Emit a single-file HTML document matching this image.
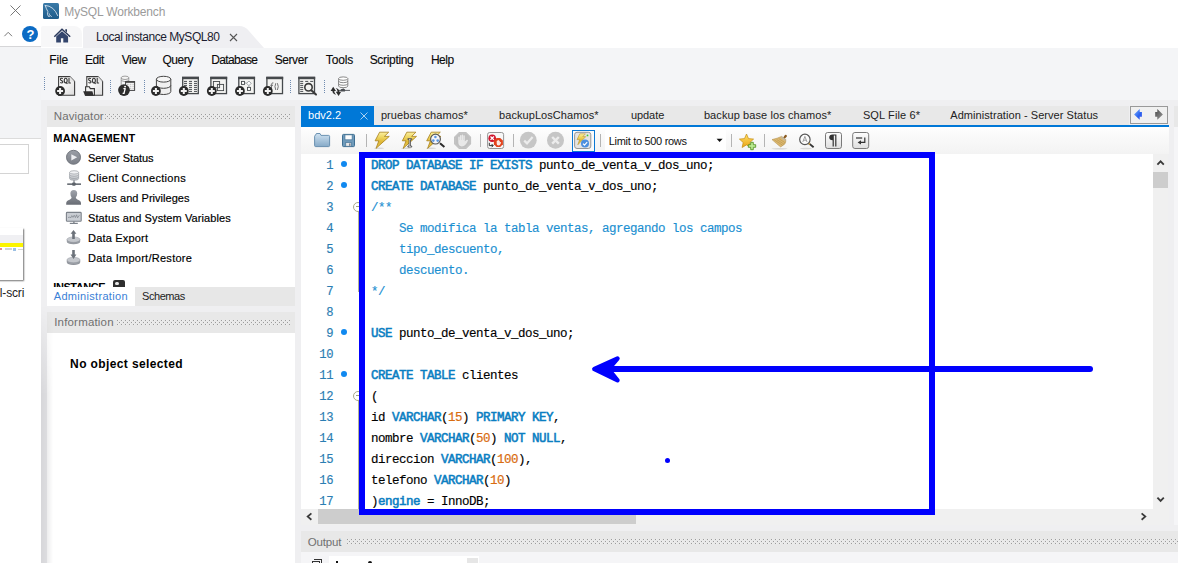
<!DOCTYPE html>
<html>
<head>
<meta charset="utf-8">
<style>
html,body{margin:0;padding:0;}
html{width:1178px;height:563px;overflow:hidden;}
body{width:1178px;height:563px;overflow:hidden;background:#fff;position:relative;font-family:"Liberation Sans",sans-serif;font-size:12px;color:#000;}
.a{position:absolute;}
.t{position:absolute;white-space:nowrap;line-height:14px;}
.dots{position:absolute;height:1px;background:repeating-linear-gradient(90deg,#9c9c9c 0 1px,rgba(255,255,255,0.35) 1px 2px,transparent 2px 4px);}
.dots::before,.dots::after{content:"";position:absolute;height:1px;right:0;}
.dots::before{left:2px;top:2px;background:repeating-linear-gradient(90deg,#9c9c9c 0 1px,rgba(255,255,255,0.35) 1px 2px,transparent 2px 4px);}
.dots::after{left:0;top:4px;background:repeating-linear-gradient(90deg,#9c9c9c 0 1px,rgba(255,255,255,0.35) 1px 2px,transparent 2px 4px);}
.code{position:absolute;left:371px;white-space:pre;font-family:"Liberation Mono",monospace;font-size:12.5px;letter-spacing:-0.5px;line-height:21px;height:21px;color:#000;-webkit-text-stroke:0.15px #000;}
.k{color:#0a7ec2;-webkit-text-stroke:0.55px #0a7ec2;}
.c{color:#1a8fd1;-webkit-text-stroke:0.15px #1a8fd1;}
.n{color:#d96c10;-webkit-text-stroke:0.2px #d96c10;}
.ln{position:absolute;left:300px;width:33.3px;text-align:right;font-family:"Liberation Mono",monospace;font-size:12.2px;letter-spacing:-0.32px;line-height:21px;height:21px;color:#2b7db3;-webkit-text-stroke:0.15px #2b7db3;}
.bp{position:absolute;left:341px;width:6px;height:6px;border-radius:3px;background:#1089f0;}
.sep{position:absolute;width:1px;background:#b8b8b8;}
.vsep{position:absolute;width:2px;background-image:linear-gradient(#6f8fc0 50%,transparent 50%);background-size:2px 2px;}
</style>
</head>
<body>
<!-- ===== left strip: other window ===== -->
<div class="a" style="left:0;top:47px;width:41px;height:91px;background:#f3f4f6;"></div>
<div class="a" style="left:0;top:46px;width:41px;height:1px;background:#d6d6d8;"></div>
<div class="a" style="left:0;top:138px;width:41px;height:1px;background:#dcdcdc;"></div>
<div class="a" style="left:-2px;top:144px;width:29px;height:28px;border:1px solid #d4d4d4;background:#fff;"></div>
<!-- thumbnail -->
<div class="a" style="left:-3px;top:228px;width:26px;height:52px;background:#fff;box-shadow:1px 1px 1.5px rgba(0,0,0,0.55);"></div>
<div class="a" style="left:0;top:235px;width:23px;height:8px;background:#f0f0f3;"></div>
<div class="a" style="left:0;top:243px;width:23px;height:3.5px;background:#fbf400;"></div>
<div class="a" style="left:0;top:248px;width:2px;height:2px;background:#e08a8a;"></div>
<div class="a" style="left:5px;top:248px;width:7px;height:2px;background:#cfd3da;"></div>
<div class="a" style="left:13px;top:247.5px;width:3px;height:3px;background:#9cc0e4;"></div>
<div class="a" style="left:18px;top:248.5px;width:5px;height:1.5px;background:#d4d4d4;"></div>
<!-- close X, caret, help -->
<svg class="a" style="left:9px;top:4px;" width="13" height="13" viewBox="0 0 13 13"><path d="M1.5 1.5 L11.5 11.5 M11.5 1.5 L1.5 11.5" stroke="#6a6a6a" stroke-width="0.9" fill="none"/></svg>
<svg class="a" style="left:3px;top:30px;" width="11" height="8" viewBox="0 0 11 8"><path d="M1.4 6.2 L5.2 2.3 L9 6.2" stroke="#7a7a7a" stroke-width="1" fill="none"/></svg>
<div class="a" style="left:22px;top:26px;width:16px;height:16px;border-radius:8px;background:#0b6bc4;"></div>

<!-- ===== workbench window ===== -->
<!-- title -->
<div class="a" style="left:43px;top:3px;width:16px;height:16px;border-radius:1.5px;background:linear-gradient(#3a7aa8,#1f5c8a);"></div>
<svg class="a" style="left:40px;top:0px;" width="24" height="24" viewBox="40 0 24 24"><path d="M45.2 5.4 Q49.4 5.6 52.8 8.4 Q56 11.2 57.7 15.6 M45.3 5.8 Q46.4 9 47.9 11.6 Q46.9 14.4 48.4 16.4 Q50.2 16.6 50.2 15.6 Q49.3 14.8 49.2 13.8 M50.7 15.9 L51.4 16.6" stroke="#dfe9f2" stroke-width="0.85" fill="none" stroke-linecap="round"/></svg>

<!-- top tab row -->
<div class="a" style="left:41px;top:26px;width:41px;height:21px;background:#f7f7f8;border-radius:2px 8px 0 0;"></div>
<svg class="a" style="left:83px;top:26px;" width="185" height="22" viewBox="0 0 185 22"><path d="M0 22 L0 4 Q0 0 4 0 L156 0 Q162 0 166 5 L181 22 Z" fill="#efeff2"/></svg>
<!-- home icon -->
<svg class="a" style="left:50px;top:26px;" width="24" height="20" viewBox="50 26 24 20"><path d="M54.3 36.8 L62 29.3 L70.2 36.8" stroke="#2b3a5c" stroke-width="1.5" fill="none"/><path d="M56.2 36.6 L62 31.3 L68.1 36.6 V42.6 H63.3 V38.2 H60.9 V42.6 H56.2 Z" fill="#33456c"/><path d="M65.3 29.2 H67 V32.4 L65.3 30.8 Z" fill="#2b3a5c"/></svg>
<svg class="a" style="left:229px;top:33px;" width="9" height="9" viewBox="0 0 9 9"><path d="M1 1 L8 8 M8 1 L1 8" stroke="#555" stroke-width="1.1" fill="none"/></svg>

<!-- main gray bg -->
<div class="a" style="left:41px;top:48px;width:1137px;height:52px;background:#f4f5f7;"></div>
<div class="a" style="left:41px;top:100px;width:1137px;height:463px;background:#efeff1;"></div>

<!-- menu -->

<svg class="a" style="left:41px;top:70px;" width="330" height="30" viewBox="41 70 330 30">
<defs>
<linearGradient id="pg" x1="0" y1="0" x2="1" y2="1"><stop offset="0" stop-color="#ffffff"/><stop offset="0.5" stop-color="#f4f4f4"/><stop offset="1" stop-color="#dcdcdc"/></linearGradient>
<g id="plus"><circle r="4.9" fill="#2b2b2b"/><path d="M-3 0 H3 M0 -3 V3" stroke="#f2f2f2" stroke-width="2"/></g>
<g id="vs" fill="#6f8bb0"><rect x="0" y="80" width="1" height="1"/><rect x="0" y="82" width="1" height="1"/><rect x="0" y="84" width="1" height="1"/><rect x="0" y="86" width="1" height="1"/><rect x="0" y="88" width="1" height="1"/><rect x="0" y="90" width="1" height="1"/><rect x="0" y="92" width="1" height="1"/></g>
<g id="frame"><rect x="0.7" y="0.6" width="15.6" height="16.2" fill="#f4f4f2" stroke="#45494c" stroke-width="1.3"/><rect x="0" y="0" width="17" height="2.4" fill="#45494c"/></g>
</defs>
<!-- grip -->
<g fill="#6f8bb0"><rect x="44" y="77" width="1" height="1"/><rect x="44" y="79" width="1" height="1"/><rect x="44" y="81" width="1" height="1"/><rect x="44" y="83" width="1" height="1"/><rect x="44" y="85" width="1" height="1"/><rect x="44" y="87" width="1" height="1"/><rect x="44" y="89" width="1" height="1"/></g>
<use href="#vs" x="110"/><use href="#vs" x="144"/><use href="#vs" x="290"/><use href="#vs" x="324"/>
<!-- SQL new -->
<path d="M58.6 76.6 H69.8 L74.6 81.4 V95.2 H58.6 Z" fill="url(#pg)" stroke="#3c3c3c" stroke-width="1.1"/>
<path d="M69.8 76.6 V81.4 H74.6" fill="#e4e4e4" stroke="none"/>
<g stroke="#3a3a3a" stroke-width="1.15" fill="none"><path d="M62.8 78.7 Q61.1 77.7 60.4 79.1 Q60.2 80.2 61.6 80.6 Q63.1 81.1 62.8 82.3 Q62.1 83.5 60.2 82.6"/><ellipse cx="65.7" cy="80.6" rx="1.45" ry="2.3"/><path d="M66.1 82.3 L67.4 84"/><path d="M69.0 78 V83 H70.9"/></g>
<use href="#plus" x="60.1" y="91"/>
<!-- SQL open -->
<path d="M86.8 76.6 H97.9 L102.6 81.4 V95.2 H86.8 Z" fill="url(#pg)" stroke="#3c3c3c" stroke-width="1.1"/>
<path d="M97.9 76.6 V81.4 H102.6" fill="#e4e4e4" stroke="none"/>
<g stroke="#3a3a3a" stroke-width="1.15" fill="none"><path d="M91.0 78.7 Q89.3 77.7 88.6 79.1 Q88.4 80.2 89.8 80.6 Q91.3 81.1 91.0 82.3 Q90.3 83.5 88.4 82.6"/><ellipse cx="93.9" cy="80.6" rx="1.45" ry="2.3"/><path d="M94.3 82.3 L95.6 84"/><path d="M97.2 78 V83 H99.1"/></g>
<path d="M85.6 95.2 V86.8 H89.3 L90.3 88.6 H94.4 V95.2 Z" fill="#f4f4f4" stroke="#333" stroke-width="1.1"/>
<path d="M83.2 91.2 H92.4 L93.6 95.7 H85 Z" fill="#303030"/>
<!-- info -->
<ellipse cx="125" cy="77.8" rx="3.8" ry="1.7" fill="#f4f4f4" stroke="#8a8a8a" stroke-width="0.8"/>
<path d="M121.2 77.8 V86 M128.8 77.8 V82" stroke="#8a8a8a" stroke-width="0.8" fill="none"/>
<path d="M121.2 80.6 Q125 82.8 128.8 80.6" stroke="#8a8a8a" stroke-width="0.8" fill="none"/>
<rect x="125.6" y="81.6" width="9" height="8.8" fill="#f8f8f8" stroke="#444" stroke-width="1"/>
<rect x="125.2" y="81.2" width="9.8" height="1.6" fill="#444"/>
<path d="M127 84.3 H128.6 M129.8 84.3 H131.4 M132.4 84.3 H133.8 M129.8 86.3 H131.4 M132.4 86.3 H133.8 M129.8 88.3 H131.4 M132.4 88.3 H133.8" stroke="#aaa" stroke-width="0.8"/>
<circle cx="124" cy="90.1" r="5.9" fill="#2d2d2d"/>
<circle cx="125.1" cy="86.6" r="0.95" fill="#fff"/><path d="M123.4 88.7 H125.2 L124 93.2 H124.9 M124 93.3 H122.6" stroke="#fff" stroke-width="1.3" fill="none" stroke-linejoin="round"/>
<!-- db+ -->
<path d="M156.4 79.2 V91.6 A7.2 2.9 0 0 0 170.8 91.6 V79.2" fill="#f0f0f0" stroke="#454545" stroke-width="1"/>
<ellipse cx="163.6" cy="79.2" rx="7.2" ry="2.9" fill="#f6f6f6" stroke="#454545" stroke-width="1"/>
<path d="M156.4 85.4 A7.2 2.9 0 0 0 170.8 85.4" fill="none" stroke="#454545" stroke-width="1"/>
<use href="#plus" x="155.9" y="91"/>
<!-- table+ -->
<use href="#frame" x="182" y="76.8"/>
<path d="M184 81.4 h3 m2 0 h3 m2 0 h3 M184 83.4 h3 m2 0 h3 m2 0 h3 M184 85.4 h3 m2 0 h3 m2 0 h3 M184 87.4 h3 m2 0 h3 m2 0 h3 M184 89.4 h3 m2 0 h3 m2 0 h3 M184 91.4 h3 m2 0 h3 m2 0 h3" stroke="#4a4e52" stroke-width="1"/>
<use href="#plus" x="183.8" y="91"/>
<!-- view+ -->
<use href="#frame" x="210.2" y="76.8"/>
<rect x="213.4" y="81.5" width="6.2" height="6.2" fill="#f4f4f2" stroke="#45494c" stroke-width="0.9"/>
<rect x="217.4" y="84.4" width="6.2" height="6.2" fill="none" stroke="#45494c" stroke-width="0.9"/>
<use href="#plus" x="211.8" y="91"/>
<!-- routine+ -->
<use href="#frame" x="238.1" y="76.8"/>
<rect x="241.5" y="81.4" width="3" height="3" fill="#fff" stroke="#45494c" stroke-width="0.9"/>
<rect x="247.5" y="87.4" width="3" height="3" fill="#fff" stroke="#45494c" stroke-width="0.9"/>
<path d="M248.9 81 L251.2 83.3 L248.9 85.6 L246.6 83.3 Z M244.6 83 H246.6 M248.9 85.6 V87.4" fill="#fff" stroke="#7a8186" stroke-width="0.7"/>
<use href="#plus" x="239.9" y="91"/>
<!-- func+ -->
<use href="#frame" x="266.2" y="76.8"/>
<g stroke="#6e6e6e" stroke-width="0.95" fill="none"><path d="M273.4 82.9 Q271.9 82.3 271.7 84.2 L271.3 90.2 M270.3 85.3 H273"/><path d="M275.8 83.2 Q274.1 86.6 275.8 90"/><path d="M277.4 83.2 Q279.1 86.6 277.4 90"/></g>
<use href="#plus" x="267.8" y="91"/>
<!-- search table -->
<use href="#frame" x="298.2" y="76.8"/>
<path d="M300.2 81.4 h3 m2 0 h3 m2 0 h3 M300.2 83.4 h3 M300.2 85.4 h3 M300.2 87.4 h3 M300.2 89.4 h3 M300.2 91.4 h3" stroke="#4a4e52" stroke-width="1"/>
<circle cx="308.5" cy="87.3" r="3.7" fill="#f4f4f2" stroke="#3a3a3a" stroke-width="1.6"/>
<path d="M311.3 90.2 L316 94.6" stroke="#3a3a3a" stroke-width="2" stroke-linecap="round"/>
<!-- reconnect -->
<path d="M338.6 78.6 V86 A4.6 1.7 0 0 0 347.8 86 V78.6" fill="#fff" stroke="#7c7c7c" stroke-width="0.9"/>
<ellipse cx="343.2" cy="78.6" rx="4.6" ry="1.7" fill="#fff" stroke="#7c7c7c" stroke-width="0.9"/>
<path d="M338.6 81 A4.6 1.7 0 0 0 347.8 81 M338.6 83.6 A4.6 1.7 0 0 0 347.8 83.6" fill="none" stroke="#7c7c7c" stroke-width="0.9"/>
<path d="M343.2 87.7 V89.4" stroke="#7c7c7c" stroke-width="0.9"/>
<rect x="340.6" y="89" width="4.6" height="2.6" rx="1.2" fill="#4a4e52"/>
<path d="M339 90.4 H350" stroke="#4a4e52" stroke-width="0.9"/>
<path d="M333.2 86.8 L336 91 H334.2 Q334.4 93.6 336.2 94.8 Q332.6 94.2 332.4 91 H330.6 Z" fill="#2e2e2e"/>
<path d="M338.6 96 L335.8 91.8 H337.6 Q337.4 89.2 335.6 88 Q339.2 88.6 339.4 91.8 H341.2 Z" fill="#2e2e2e"/>
</svg>


<!-- Navigator -->
<div class="a" style="left:47px;top:106px;width:248px;height:21px;background:#e8e8e8;"></div>
<div class="dots" style="left:105px;top:114px;width:185px;"></div>
<div class="a" style="left:47px;top:127px;width:248px;height:160px;background:#fff;"></div>
<svg class="a" style="left:60px;top:146px;" width="30" height="140" viewBox="60 146 30 140">
<defs>
<linearGradient id="gr1" x1="0" y1="0" x2="0" y2="1"><stop offset="0" stop-color="#9a9ea6"/><stop offset="1" stop-color="#7b7f87"/></linearGradient>
<linearGradient id="gr2" x1="0" y1="0" x2="0" y2="1"><stop offset="0" stop-color="#eceef0"/><stop offset="1" stop-color="#b9bcc2"/></linearGradient>
<linearGradient id="gr3" x1="0" y1="0" x2="0" y2="1"><stop offset="0" stop-color="#a0a4ac"/><stop offset="1" stop-color="#686c74"/></linearGradient>
</defs>
<!-- server status -->
<circle cx="73.5" cy="157.3" r="7" fill="url(#gr1)" stroke="#6c7078" stroke-width="0.9"/>
<path d="M71.3 154.2 V160.4 L77.2 157.3 Z" fill="#ecedf0"/>
<!-- client connections -->
<path d="M69.6 172.4 V178.6 A4.5 1.7 0 0 0 78.6 178.6 V172.4" fill="url(#gr2)" stroke="#9a9da4" stroke-width="0.7"/>
<ellipse cx="74.1" cy="172.4" rx="4.5" ry="1.7" fill="#f0f1f3" stroke="#9a9da4" stroke-width="0.7"/>
<path d="M69.6 174.6 A4.5 1.7 0 0 0 78.6 174.6 M69.6 176.8 A4.5 1.7 0 0 0 78.6 176.8" fill="none" stroke="#9a9da4" stroke-width="0.7"/>
<rect x="73.4" y="180.3" width="1.2" height="3" fill="#7a7e86"/>
<rect x="67.2" y="183.4" width="13.8" height="1.5" fill="#5c626a"/>
<rect x="72.2" y="182.4" width="3.4" height="3.4" rx="0.8" fill="#5c626a"/>
<!-- users -->
<path d="M73.8 190 Q77.2 190 77.2 193.6 Q77.2 196 75.8 197.2 Q75.8 198.6 77.4 199.4 Q81 200.6 81 203.2 V204.8 H66.2 V203.2 Q66.2 200.6 70 199.4 Q71.6 198.6 71.6 197.2 Q70.4 196 70.4 193.6 Q70.4 190 73.8 190 Z" fill="url(#gr3)"/>
<!-- status monitor -->
<rect x="66.4" y="212.4" width="14.8" height="8.8" rx="0.8" fill="#c9cdd3" stroke="#7c828a" stroke-width="1.1"/>
<path d="M68 217.6 L69.6 217 L70.6 218 L71.8 215.6 L73 217.4 L74.2 215.2 L75.4 217.6 L76.6 214.8 L77.6 217.8 L79.4 215.2" stroke="#70767e" stroke-width="0.6" fill="none"/>
<rect x="73.2" y="221.4" width="1.4" height="1.6" fill="#7c828a"/>
<rect x="69.8" y="222.8" width="8" height="1.2" fill="#7c828a"/>
<!-- export -->
<path d="M66.9 239.6 V241.8 A6.6 2.5 0 0 0 80.1 241.8 V239.6" fill="#8a8e96"/>
<path d="M66.9 240.7 A6.6 2.5 0 0 0 80.1 240.7" stroke="#a8acb2" stroke-width="0.6" fill="none"/>
<ellipse cx="73.5" cy="239.6" rx="6.6" ry="2.7" fill="#c4c7cc" stroke="#9a9ea6" stroke-width="0.5"/>
<path d="M73.5 230 L76.4 233.7 H74.8 V239 H72.2 V233.7 H70.6 Z" fill="#6c727a"/>
<!-- import -->
<path d="M66.9 260 V262.4 A6.6 2.5 0 0 0 80.1 262.4 V260" fill="#8a8e96"/>
<path d="M66.9 261.2 A6.6 2.5 0 0 0 80.1 261.2" stroke="#a8acb2" stroke-width="0.6" fill="none"/>
<ellipse cx="73.5" cy="260" rx="6.6" ry="2.7" fill="#c4c7cc" stroke="#9a9ea6" stroke-width="0.5"/>
<path d="M73.5 259 L70.6 254.6 H72.2 V250 H74.8 V254.6 H76.4 Z" fill="#6c727a"/>
</svg>
<!-- instance wrench icon -->
<div class="a" style="left:113px;top:280px;width:12px;height:6.5px;background:#2e2e2e;border-radius:2px 2px 0 0;"></div>
<div class="a" style="left:115px;top:281.5px;width:4px;height:3px;background:#e8e8e8;border-radius:2px;"></div>

<!-- nav tabs -->
<div class="a" style="left:47px;top:287px;width:248px;height:19px;background:#e7e7e7;"></div>
<div class="a" style="left:47px;top:287px;width:88px;height:19px;background:#fff;"></div>

<!-- Information -->
<div class="a" style="left:47px;top:312px;width:248px;height:21px;background:#e8e8e8;"></div>
<div class="dots" style="left:117px;top:320px;width:173px;"></div>
<div class="a" style="left:47px;top:333px;width:248px;height:230px;background:#fff;"></div>

<!-- editor tab strip -->
<div class="a" style="left:301px;top:106px;width:827.5px;height:19px;background:#e8e8e8;"></div>
<div class="a" style="left:301px;top:106px;width:73px;height:19px;background:#0078d7;"></div>
<div class="a" style="left:301px;top:125px;width:868px;height:2px;background:#0078d7;"></div>
<svg class="a" style="left:360px;top:112px;" width="8" height="8" viewBox="0 0 8 8"><path d="M0.5 0.5 L7.5 7.5 M7.5 0.5 L0.5 7.5" stroke="#a9d0f2" stroke-width="1" fill="none"/></svg>
<!-- tab nav arrows -->
<div class="a" style="left:1130px;top:106px;width:36px;height:15.7px;border:1px solid #999;background:#f0f0f0;"></div>
<svg class="a" style="left:1130px;top:106px;" width="38" height="18" viewBox="1130 106 38 18"><defs><linearGradient id="ab" x1="0" y1="0" x2="1" y2="1"><stop offset="0" stop-color="#7db4ff"/><stop offset="0.6" stop-color="#2a62f0"/><stop offset="1" stop-color="#3a50e8"/></linearGradient><linearGradient id="ag" x1="0" y1="0" x2="1" y2="1"><stop offset="0" stop-color="#4a4a4a"/><stop offset="1" stop-color="#9a9a9a"/></linearGradient></defs>
<path d="M1134.1 114.4 L1139.7 109.1 V112 H1141.9 V116.8 H1139.7 V119.7 Z" fill="url(#ab)"/>
<path d="M1162.9 114.4 L1157.3 109.1 V112 H1155.2 V116.8 H1157.3 V119.7 Z" fill="url(#ag)"/></svg>

<!-- editor toolbar -->
<div class="a" style="left:301px;top:127px;width:868px;height:27px;background:linear-gradient(#ffffff,#fafafa 30%,#f3f3f3);"></div>
<div class="a" style="left:605px;top:130px;width:121px;height:20px;background:#fff;"></div>
<svg class="a" style="left:301px;top:127px;" width="600" height="27" viewBox="301 127 600 27">
<defs>
<linearGradient id="fold" x1="0" y1="0" x2="0" y2="1"><stop offset="0" stop-color="#cfe2f1"/><stop offset="1" stop-color="#86aac8"/></linearGradient>
<linearGradient id="bolt" x1="0" y1="0" x2="0" y2="1"><stop offset="0" stop-color="#fbf0a0"/><stop offset="0.35" stop-color="#ecd25a"/><stop offset="0.6" stop-color="#dfb736"/><stop offset="1" stop-color="#e8cc58"/></linearGradient>
<linearGradient id="btn" x1="0" y1="0" x2="0" y2="1"><stop offset="0" stop-color="#ffffff"/><stop offset="1" stop-color="#dedede"/></linearGradient>
<linearGradient id="star" x1="0" y1="0" x2="0" y2="1"><stop offset="0" stop-color="#ffe066"/><stop offset="1" stop-color="#eaa416"/></linearGradient>
<path id="bz" d="M379.6 132.2 H388.7 L384.4 136.4 H389.3 L376 148.4 L378.8 140.8 H375.1 Z" fill="url(#bolt)" stroke="#a8801c" stroke-width="0.8" stroke-linejoin="round"/>
</defs>
<!-- separators -->
<g fill="#b4b4b4"><rect x="366" y="134" width="1" height="13"/><rect x="480" y="134" width="1" height="13"/><rect x="513" y="134" width="1" height="13"/><rect x="600" y="134" width="1" height="13"/><rect x="731" y="134" width="1" height="13"/><rect x="764" y="134" width="1" height="13"/></g>
<!-- folder -->
<path d="M315.4 135.4 L316.4 133.5 H320 L321 135.4 H328.6 Q329.6 135.4 329.6 136.4 V145.6 Q329.6 146.6 328.6 146.6 H315.6 Q314.6 146.6 314.6 145.6 V136.4 Q314.6 135.4 315.4 135.4 Z" fill="url(#fold)" stroke="#5d88aa" stroke-width="0.9"/>
<!-- save -->
<rect x="342.5" y="134.4" width="12" height="12.2" rx="1" fill="#6f9aba" stroke="#3f6f92" stroke-width="1"/>
<rect x="345" y="134.9" width="7.1" height="4.9" fill="#fdfdfd" stroke="#3f6f92" stroke-width="0.6"/>
<rect x="345.8" y="142.6" width="5.4" height="3.6" fill="#e8e8e8" stroke="#3f6f92" stroke-width="0.6"/>
<rect x="349.3" y="143.4" width="1" height="2.4" fill="#556"/>
<!-- bolts -->
<ellipse cx="379" cy="148.3" rx="5" ry="0.8" fill="#000" opacity="0.12"/>
<use href="#bz"/>
<ellipse cx="406" cy="148.3" rx="5" ry="0.8" fill="#000" opacity="0.12"/>
<use href="#bz" x="27.2"/>
<path d="M407.9 138.6 H411.7 V139.6 H410.5 V146 H411.7 V147.1 H407.9 V146 H409.1 V139.6 H407.9 Z" fill="#fff" stroke="#333" stroke-width="0.7"/>
<ellipse cx="431" cy="148.3" rx="5" ry="0.8" fill="#000" opacity="0.12"/>
<use href="#bz" x="51.6"/>
<path d="M440 143.2 L444.4 147" stroke="#2a2a2a" stroke-width="2"/>
<circle cx="435.5" cy="139.1" r="4.9" fill="#f6f6fa" stroke="#5a5a5a" stroke-width="1.2"/>
<circle cx="435.4" cy="137" r="1.3" fill="#5b97e0"/><circle cx="433.3" cy="140.6" r="1.3" fill="#5b97e0"/><circle cx="437.7" cy="140.6" r="1.3" fill="#5b97e0"/>
<!-- stop (disabled) -->
<path d="M459 132 H466.1 L471.1 137 V143.9 L466.1 148.9 H459 L454 143.9 V137 Z" fill="#bfbfbf"/>
<path d="M459.3 133 H465.8 L470.1 137.3 V143.6 L465.8 147.9 H459.3 L455 143.6 V137.3 Z" fill="none" stroke="#cacaca" stroke-width="0.7"/>
<path d="M458.3 142 V137.2 Q458.3 136.4 459 136.4 Q459.7 136.4 459.7 137.2 V140 H460 V135.7 Q460 134.9 460.7 134.9 Q461.4 134.9 461.4 135.7 V140 H461.7 V135.3 Q461.7 134.6 462.4 134.6 Q463.1 134.6 463.1 135.3 V140 H463.4 V136 Q463.4 135.3 464.1 135.3 Q464.8 135.3 464.8 136.1 V141.6 L466.8 139.8 Q467.8 139.4 468 140.4 Q466.8 143.4 465.2 145 Q464 146.4 461.8 146.4 Q458.3 146.4 458.3 142 Z" fill="#e8e8e8"/>
<!-- red icon -->
<rect x="487.6" y="132.5" width="16" height="16" rx="2" fill="#f7f7f7" stroke="#8a8a8a" stroke-width="0.9"/>
<circle cx="492.2" cy="138.2" r="3.8" fill="#d0142c"/>
<path d="M490.5 136.5 L493.9 139.9 M493.9 136.5 L490.5 139.9" stroke="#fff" stroke-width="1.3"/>
<path d="M489.3 142.8 V145.6 H493 M491.6 144 L493.2 145.6 L491.6 147.2" stroke="#2a2a2a" stroke-width="0.95" fill="none"/>
<path d="M496.6 137.9 H500.2 L502.9 140.6 V144.2 L500.2 146.9 H496.6 L493.9 144.2 V140.6 Z" fill="#e2421c"/>
<path d="M496.7 143 V141 Q497 140.5 497.4 141 V140.4 Q497.8 140 498.2 140.4 V140.3 Q498.6 139.9 499 140.3 V140.8 Q499.4 140.4 499.8 141 V142.6 L500.7 142 Q501.2 141.9 501.2 142.4 L500.2 144.4 Q499.7 145.5 498.4 145.5 Q496.7 145.5 496.7 143.8 Z" fill="#fbe9e4"/>
<!-- gray check / x -->
<circle cx="528.3" cy="140.2" r="8.4" fill="#c6c6c6"/>
<path d="M524.2 140.6 L527 143.4 L532.6 137" stroke="#ececec" stroke-width="2.2" fill="none"/>
<circle cx="555.5" cy="140.3" r="8.5" fill="#c6c6c6"/>
<path d="M552.2 137 L558.8 143.6 M558.8 137 L552.2 143.6" stroke="#ececec" stroke-width="2.4" fill="none"/>
<!-- toggle -->
<rect x="572.5" y="130.5" width="22" height="21" fill="#fbfbfb" stroke="#0b78d4" stroke-width="1"/>
<rect x="574.6" y="132.3" width="16.2" height="16.2" rx="2.4" fill="#e4e4e4" stroke="#8c8c8c" stroke-width="0.9"/>
<path d="M579.8 133.8 H585.4 L582.8 136.6 H585.8 L577.8 144.8 L579.6 139.6 H577 Z" fill="url(#bolt)" stroke="#b08820" stroke-width="0.5"/>
<circle cx="587.5" cy="135.4" r="0.9" fill="#3cc82a"/>
<circle cx="585" cy="143.6" r="4" fill="#4d8fdf"/>
<path d="M583 143.6 L584.5 145.2 L587.2 142.2" stroke="#fff" stroke-width="1.2" fill="none"/>
<!-- dropdown arrow -->
<path d="M716.6 138.8 H722.6 L719.6 142 Z" fill="#111"/>
<!-- star -->
<path d="M746.5 134 L748.5 138.6 L753.6 139.1 L749.8 142.5 L750.9 147.5 L746.5 144.9 L742.1 147.5 L743.2 142.5 L739.4 139.1 L744.5 138.6 Z" fill="url(#star)" stroke="#c48e14" stroke-width="0.7" stroke-linejoin="round"/>
<path d="M750.7 142.3 H753.3 V144.7 H755.7 V147.3 H753.3 V149.7 H750.7 V147.3 H748.3 V144.7 H750.7 Z" fill="#b9ea90" stroke="#4b8a1c" stroke-width="0.8"/>
<!-- broom -->
<ellipse cx="779.5" cy="148.7" rx="8" ry="0.7" fill="#000" opacity="0.13"/>
<path d="M783.2 137.6 L785 135 Q786.2 134.2 786.8 135.4 Q787.2 136.4 786.2 137.2 L784.6 138.8 Z" fill="#8a5a20"/>
<path d="M781.6 136.4 L785.8 139.4 Q786.2 142.6 784.6 144.2 L780.6 146.9 Q776.4 143.6 772 139.6 Q777.4 138.4 781.6 136.4 Z" fill="#dcb870" stroke="#a8843c" stroke-width="0.5"/>
<path d="M781.8 136.6 L785.6 139.4 L785.4 141 L780.6 137.4 Z" fill="#bfb6a4"/>
<path d="M774.4 140 L782.6 145.2 M776.6 139.4 L784 144.2 M778.8 138.6 L785.2 142.8" stroke="#b08c44" stroke-width="0.5" fill="none"/>
<!-- magnifier A -->
<ellipse cx="806" cy="148.5" rx="6" ry="0.7" fill="#000" opacity="0.12"/>
<path d="M808.9 143.4 L813.6 147.3" stroke="#333" stroke-width="1.8"/>
<path d="M808.4 143 L809.8 144.2" stroke="#d8a848" stroke-width="1.8"/>
<circle cx="804.9" cy="139.4" r="5.2" fill="#fbfbfb" stroke="#555" stroke-width="1.2"/>
<path d="M802.8 142 L804.9 136.4 L807 142 M803.6 140.2 H806.2" stroke="#8c8c8c" stroke-width="0.8" fill="none"/>
<!-- pilcrow btn -->
<rect x="825.5" y="132.5" width="16" height="16" rx="2.2" fill="url(#btn)" stroke="#7a7a7a" stroke-width="1"/>
<path d="M832.6 134.4 H836.4 V146.6 H835.2 V135.6 H833.8 V146.6 H832.6 V140.2 Q829.2 140.2 829.2 137.3 Q829.2 134.4 832.6 134.4 Z" fill="#333"/>
<!-- wrap btn -->
<rect x="852.7" y="132.5" width="16" height="16" rx="2.2" fill="url(#btn)" stroke="#7a7a7a" stroke-width="1"/>
<path d="M856 138 H862.2" stroke="#333" stroke-width="1.2"/>
<path d="M864.8 137.4 V142.4 H860" stroke="#333" stroke-width="1.2" fill="none"/>
<path d="M857.6 142.4 L861 140.2 V144.6 Z" fill="#333"/>
</svg>


<!-- editor -->
<div class="a" style="left:301px;top:154px;width:852px;height:355px;background:#fff;"></div>
<div class="ln" style="top:155.8px;">1</div>
<div class="bp" style="top:161.3px;"></div>
<div class="code" style="top:155.5px;"><span class="k">DROP DATABASE IF EXISTS</span> punto_de_venta_v_dos_uno;</div>
<div class="ln" style="top:176.8px;">2</div>
<div class="bp" style="top:182.3px;"></div>
<div class="code" style="top:176.5px;"><span class="k">CREATE DATABASE</span> punto_de_venta_v_dos_uno;</div>
<div class="ln" style="top:197.8px;">3</div>
<div class="a" style="left:353px;top:201.5px;width:8px;height:8px;border:1px solid #a9a98c;border-radius:5px;background:#fff;"></div><div class="a" style="left:355.5px;top:206.0px;width:5px;height:1px;background:#a0a084;"></div><div class="a" style="left:358px;top:211.5px;width:1px;height:80px;background:#b4b498;"></div>
<div class="code" style="top:197.5px;"><span class="c">/**</span></div>
<div class="ln" style="top:218.8px;">4</div>
<div class="code" style="top:218.5px;"><span class="c">    Se modifica la tabla ventas, agregando los campos</span></div>
<div class="ln" style="top:239.8px;">5</div>
<div class="code" style="top:239.5px;"><span class="c">    tipo_descuento,</span></div>
<div class="ln" style="top:260.8px;">6</div>
<div class="code" style="top:260.5px;"><span class="c">    descuento.</span></div>
<div class="ln" style="top:281.8px;">7</div>
<div class="code" style="top:281.5px;"><span class="c">*/</span></div>
<div class="ln" style="top:302.8px;">8</div>
<div class="ln" style="top:323.8px;">9</div>
<div class="bp" style="top:329.3px;"></div>
<div class="code" style="top:323.5px;"><span class="k">USE</span> punto_de_venta_v_dos_uno;</div>
<div class="ln" style="top:344.8px;">10</div>
<div class="ln" style="top:365.8px;">11</div>
<div class="bp" style="top:371.3px;"></div>
<div class="code" style="top:365.5px;"><span class="k">CREATE TABLE</span> clientes</div>
<div class="ln" style="top:386.8px;">12</div>
<div class="a" style="left:353px;top:390.5px;width:8px;height:8px;border:1px solid #a9a98c;border-radius:5px;background:#fff;"></div><div class="a" style="left:355.5px;top:395.0px;width:5px;height:1px;background:#a0a084;"></div><div class="a" style="left:358px;top:400.5px;width:1px;height:110px;background:#b4b498;"></div>
<div class="code" style="top:386.5px;">(</div>
<div class="ln" style="top:407.8px;">13</div>
<div class="code" style="top:407.5px;">id <span class="k">VARCHAR</span>(<span class="n">15</span>) <span class="k">PRIMARY KEY</span>,</div>
<div class="ln" style="top:428.8px;">14</div>
<div class="code" style="top:428.5px;">nombre <span class="k">VARCHAR</span>(<span class="n">50</span>) <span class="k">NOT NULL</span>,</div>
<div class="ln" style="top:449.8px;">15</div>
<div class="code" style="top:449.5px;">direccion <span class="k">VARCHAR</span>(<span class="n">100</span>),</div>
<div class="ln" style="top:470.8px;">16</div>
<div class="code" style="top:470.5px;">telefono <span class="k">VARCHAR</span>(<span class="n">10</span>)</div>
<div class="ln" style="top:491.8px;">17</div>
<div class="code" style="top:491.5px;">)<span class="k">engine</span> = InnoDB;</div>

<!-- scrollbars -->
<div class="a" style="left:1153px;top:154px;width:15px;height:355px;background:#f0f0f0;"></div>
<div class="a" style="left:1153px;top:171.5px;width:15px;height:16px;background:#cdcdcd;"></div>
<svg class="a" style="left:1155px;top:158px;" width="11" height="9" viewBox="0 0 11 9"><path d="M2.4 6.6 L5.6 3.3 L8.8 6.6" stroke="#3a3a3a" stroke-width="1.8" fill="none"/></svg>
<svg class="a" style="left:1155px;top:495px;" width="11" height="9" viewBox="0 0 11 9"><path d="M2.4 2.6 L5.6 5.9 L8.8 2.6" stroke="#3a3a3a" stroke-width="1.8" fill="none"/></svg>
<div class="a" style="left:301px;top:509px;width:867.5px;height:16px;background:#f0f0f0;"></div>
<div class="a" style="left:318px;top:509px;width:318px;height:15px;background:#cdcdcd;"></div>
<svg class="a" style="left:304px;top:511px;" width="10" height="11" viewBox="0 0 10 11"><path d="M7.4 2.4 L3.7 5.6 L7.4 8.8" stroke="#3a3a3a" stroke-width="1.8" fill="none"/></svg>
<svg class="a" style="left:1139px;top:511px;" width="10" height="11" viewBox="0 0 10 11"><path d="M2.6 2.4 L6.3 5.6 L2.6 8.8" stroke="#3a3a3a" stroke-width="1.8" fill="none"/></svg>
<!-- right side panel sliver -->
<div class="a" style="left:1173.5px;top:106px;width:5px;height:21px;background:#e8e8e8;"></div>
<div class="a" style="left:1173.5px;top:127px;width:5px;height:398px;background:#f5f5f7;"></div>

<!-- Output -->
<div class="a" style="left:301px;top:531px;width:877px;height:21px;background:#e8e8e8;"></div>
<div class="dots" style="left:347px;top:539px;width:831px;"></div>
<div class="a" style="left:301px;top:552px;width:877px;height:11px;background:#f5f5f7;"></div>
<div class="a" style="left:329px;top:556px;width:150px;height:7px;background:#fff;"></div>
<div class="a" style="left:467px;top:557.5px;width:10.5px;height:6px;background:#e6e6e6;"></div>
<div class="a" style="left:313.5px;top:558.5px;width:8px;height:6px;border:1px solid #333;border-left:none;border-bottom:none;box-sizing:border-box;"></div>
<div class="a" style="left:312px;top:560.5px;width:8px;height:6px;border:1px solid #333;background:#f5f5f7;box-sizing:border-box;"></div>
<div class="a" style="left:335.5px;top:561.3px;width:2.6px;height:2px;background:#111;"></div>
<div class="a" style="left:367.5px;top:561.3px;width:4px;height:2px;background:#111;border-radius:2px 2px 0 0;"></div>

<div class="t" style="left:64.30px;top:3.54px;font-size:12px;color:#9b9b9b;letter-spacing:-0.165px;line-height:16px;">MySQL Workbench</div>
<div class="t" style="left:96.10px;top:28.74px;font-size:12px;color:#1c1c30;letter-spacing:-0.457px;line-height:16px;">Local instance MySQL80</div>
<div class="t" style="left:49.20px;top:51.74px;font-size:12px;color:#0a0a0a;letter-spacing:-0.079px;line-height:16px;-webkit-text-stroke:0.12px #0a0a0a;">File</div>
<div class="t" style="left:84.90px;top:51.74px;font-size:12px;color:#0a0a0a;letter-spacing:-0.426px;line-height:16px;-webkit-text-stroke:0.12px #0a0a0a;">Edit</div>
<div class="t" style="left:121.70px;top:51.74px;font-size:12px;color:#0a0a0a;letter-spacing:-0.431px;line-height:16px;-webkit-text-stroke:0.12px #0a0a0a;">View</div>
<div class="t" style="left:162.40px;top:51.74px;font-size:12px;color:#0a0a0a;letter-spacing:-0.419px;line-height:16px;-webkit-text-stroke:0.12px #0a0a0a;">Query</div>
<div class="t" style="left:211.30px;top:51.74px;font-size:12px;color:#0a0a0a;letter-spacing:-0.681px;line-height:16px;-webkit-text-stroke:0.12px #0a0a0a;">Database</div>
<div class="t" style="left:274.80px;top:51.74px;font-size:12px;color:#0a0a0a;letter-spacing:-0.449px;line-height:16px;-webkit-text-stroke:0.12px #0a0a0a;">Server</div>
<div class="t" style="left:325.80px;top:51.74px;font-size:12px;color:#0a0a0a;letter-spacing:-0.128px;line-height:16px;-webkit-text-stroke:0.12px #0a0a0a;">Tools</div>
<div class="t" style="left:369.70px;top:51.74px;font-size:12px;color:#0a0a0a;letter-spacing:-0.323px;line-height:16px;-webkit-text-stroke:0.12px #0a0a0a;">Scripting</div>
<div class="t" style="left:430.90px;top:51.74px;font-size:12px;color:#0a0a0a;letter-spacing:-0.493px;line-height:16px;-webkit-text-stroke:0.12px #0a0a0a;">Help</div>
<div class="t" style="left:53.80px;top:108.02px;font-size:11.5px;color:#707070;letter-spacing:0.085px;line-height:16px;">Navigator</div>
<div class="t" style="left:53.30px;top:129.99px;font-size:11px;color:#000;letter-spacing:0.217px;line-height:16px;font-weight:bold;">MANAGEMENT</div>
<div class="t" style="left:88.00px;top:149.79px;font-size:11px;color:#000;letter-spacing:-0.087px;line-height:16px;-webkit-text-stroke:0.18px #000;">Server Status</div>
<div class="t" style="left:88.00px;top:169.79px;font-size:11px;color:#000;letter-spacing:0.316px;line-height:16px;-webkit-text-stroke:0.18px #000;">Client Connections</div>
<div class="t" style="left:88.00px;top:189.89px;font-size:11px;color:#000;letter-spacing:0.033px;line-height:16px;-webkit-text-stroke:0.18px #000;">Users and Privileges</div>
<div class="t" style="left:88.00px;top:209.79px;font-size:11px;color:#000;letter-spacing:0.088px;line-height:16px;-webkit-text-stroke:0.18px #000;">Status and System Variables</div>
<div class="t" style="left:88.00px;top:229.79px;font-size:11px;color:#000;letter-spacing:0.192px;line-height:16px;-webkit-text-stroke:0.18px #000;">Data Export</div>
<div class="t" style="left:88.00px;top:249.79px;font-size:11px;color:#000;letter-spacing:0.270px;line-height:16px;-webkit-text-stroke:0.18px #000;">Data Import/Restore</div>
<div class="t" style="left:53.80px;top:287.79px;font-size:11px;color:#3a80d6;letter-spacing:0.308px;line-height:16px;">Administration</div>
<div class="t" style="left:142.00px;top:287.79px;font-size:11px;color:#222;letter-spacing:-0.426px;line-height:16px;">Schemas</div>
<div class="t" style="left:54.20px;top:313.82px;font-size:11.5px;color:#707070;letter-spacing:0.187px;line-height:16px;">Information</div>
<div class="t" style="left:70.10px;top:356.14px;font-size:12px;color:#000;letter-spacing:0.381px;line-height:16px;font-weight:bold;">No object selected</div>
<div class="t" style="left:308.00px;top:106.99px;font-size:11px;color:#fff;letter-spacing:0.035px;line-height:16px;">bdv2.2</div>
<div class="t" style="left:380.90px;top:106.79px;font-size:11px;color:#222;letter-spacing:0.093px;line-height:16px;">pruebas chamos*</div>
<div class="t" style="left:499.00px;top:106.79px;font-size:11px;color:#222;letter-spacing:0.070px;line-height:16px;">backupLosChamos*</div>
<div class="t" style="left:630.90px;top:106.79px;font-size:11px;color:#222;letter-spacing:-0.049px;line-height:16px;">update</div>
<div class="t" style="left:703.90px;top:106.79px;font-size:11px;color:#222;letter-spacing:0.093px;line-height:16px;">backup base los chamos*</div>
<div class="t" style="left:862.90px;top:106.79px;font-size:11px;color:#222;letter-spacing:0.135px;line-height:16px;">SQL File 6*</div>
<div class="t" style="left:950.30px;top:106.79px;font-size:11px;color:#222;letter-spacing:0.058px;line-height:16px;">Administration - Server Status</div>
<div class="t" style="left:608.70px;top:132.89px;font-size:11px;color:#111;letter-spacing:-0.303px;line-height:16px;">Limit to 500 rows</div>
<div class="t" style="left:307.80px;top:533.72px;font-size:11.5px;color:#707070;letter-spacing:-0.164px;line-height:16px;">Output</div>
<div class="t" style="left:-0.20px;top:285.44px;font-size:12px;color:#222;letter-spacing:-0.165px;line-height:16px;">l-scri</div>
<div class="t" style="left:26.50px;top:26.80px;font-size:13px;color:#fff;letter-spacing:0.000px;line-height:16px;font-weight:bold;">?</div>
<div class="a" style="left:47px;top:280px;width:120px;height:6.5px;overflow:hidden;"><div class="t" style="left:6.3px;top:-1px;font-weight:bold;font-size:11px;line-height:16px;letter-spacing:-0.45px;">INSTANCE</div></div>

<!-- shadow from left window -->
<div class="a" style="left:41px;top:305px;width:12px;height:258px;background:linear-gradient(to right,rgba(0,0,10,0.10) 0,rgba(0,0,10,0.075) 50%,rgba(0,0,10,0) 100%);-webkit-mask-image:linear-gradient(to bottom,transparent 0,#000 90px);mask-image:linear-gradient(to bottom,transparent 0,#000 90px);"></div>

<!-- annotations -->
<div class="a" style="left:359px;top:152px;width:564px;height:351px;border:6px solid #0000fe;"></div>
<svg class="a" style="left:585px;top:350px;" width="520" height="40" viewBox="585 350 520 40"><path d="M612 369 L1090 369" stroke="#0000fe" stroke-width="6" fill="none" stroke-linecap="round"/><path d="M617.5 358.5 L594.3 369.1 L617.5 380.3 L608.5 369.1 Z" fill="#0000fe" stroke="#0000fe" stroke-width="4.4" stroke-linejoin="round"/></svg>
<div class="a" style="left:665px;top:458px;width:5px;height:5px;border-radius:2.5px;background:#0000fe;"></div>
</body>
</html>
